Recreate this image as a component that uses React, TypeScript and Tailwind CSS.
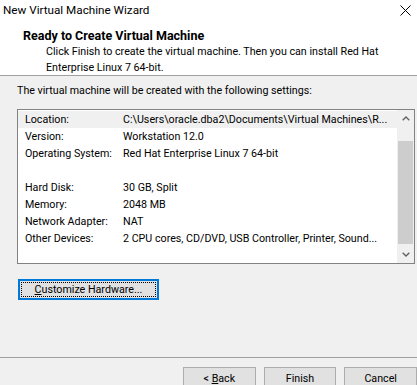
const rows: [string, string][] = [
  ["Location:", "C:\\Users\\oracle.dba2\\Documents\\Virtual Machines\\R..."],
  ["Version:", "Workstation 12.0"],
  ["Operating System:", "Red Hat Enterprise Linux 7 64-bit"],
  ["", ""],
  ["Hard Disk:", "30 GB, Split"],
  ["Memory:", "2048 MB"],
  ["Network Adapter:", "NAT"],
  ["Other Devices:", "2 CPU cores, CD/DVD, USB Controller, Printer, Sound..."]
]

function WinButton({ children }: { children: React.ReactNode }) {
  return (
    <button
      type="button"
      className="flex h-[23px] w-[73px] items-center justify-center border border-[#adadad] bg-[#e1e1e1] text-black"
    >
      <span>{children}</span>
    </button>
  )
}

export default function App() {
  return (
    <div
      className="flex h-[385px] w-[417px] flex-col overflow-hidden bg-[#f0f0f0] text-[10.7px] leading-[16px] text-black"
      style={{ fontFamily: 'Roboto, "Liberation Sans", sans-serif' }}
    >
      <div className="h-[76px] shrink-0 border-b border-[#a0a0a0] bg-white">
        <div className="flex h-[19px] items-center justify-between pl-[3px] pr-[6px]">
          <span className="text-[11.7px]">New Virtual Machine Wizard</span>
          <svg width="11" height="11" viewBox="0 0 11 11" className="mt-[1px]">
            <path d="M0.5 0.5 L10.5 10.5 M10.5 0.5 L0.5 10.5" stroke="#000" strokeWidth="1" fill="none" />
          </svg>
        </div>
        <div className="pl-[23px] pt-[9px] text-[12.5px] font-bold">Ready to Create Virtual Machine</div>
        <div className="pl-[46px]">
          <p>Click Finish to create the virtual machine. Then you can install Red Hat</p>
          <p>Enterprise Linux 7 64-bit.</p>
        </div>
      </div>

      <p className="pl-[17px] pt-[7px]">The virtual machine will be created with the following settings:</p>

      <div className="ml-[17px] mr-[2px] mt-[10px] flex h-[155px] shrink-0 border border-[#828282] bg-white">
        <div className="min-w-0 flex-1 pt-[1px]">
          {rows.map(([label, value], i) => (
            <div
              key={i}
              className={`flex h-[17px] items-center whitespace-nowrap pl-[7px] ${i === 0 ? "bg-[#f0f0f0]" : ""}`}
            >
              <span className="w-[98px] shrink-0">{label}</span>
              <span>{value}</span>
            </div>
          ))}
        </div>
        <div className="flex w-[17px] shrink-0 flex-col bg-[#f0f0f0]">
          <div className="flex h-[17px] items-center justify-center">
            <svg width="8" height="5" viewBox="0 0 8 5">
              <path d="M0.7 4.3 L4 1 L7.3 4.3" stroke="#606060" strokeWidth="1.3" fill="none" />
            </svg>
          </div>
          <div className="flex-1 px-[1px] pb-[2px] pt-[14px]">
            <div className="h-full bg-[#cdcdcd]" />
          </div>
          <div className="flex h-[17px] items-center justify-center">
            <svg width="8" height="5" viewBox="0 0 8 5">
              <path d="M0.7 0.7 L4 4 L7.3 0.7" stroke="#606060" strokeWidth="1.3" fill="none" />
            </svg>
          </div>
        </div>
      </div>

      <div className="pl-[18px] pt-[15px]">
        <button
          type="button"
          className="flex h-[21px] w-[141px] items-center justify-center border-2 border-[#0078d7] bg-[#e1e1e1] p-[1px]"
        >
          <span className="flex h-full w-full items-center justify-center border border-dotted border-black">
            <span>
              <span className="underline">C</span>ustomize Hardware...
            </span>
          </span>
        </button>
      </div>

      <div className="mt-auto h-[28px] shrink-0 border-t border-[#a0a0a0]">
        <div className="flex gap-[8px] pl-[183px] pt-[9px]">
          <WinButton>
            &lt; <span className="underline">B</span>ack
          </WinButton>
          <WinButton>Finish</WinButton>
          <WinButton>Cancel</WinButton>
        </div>
      </div>
    </div>
  )
}
